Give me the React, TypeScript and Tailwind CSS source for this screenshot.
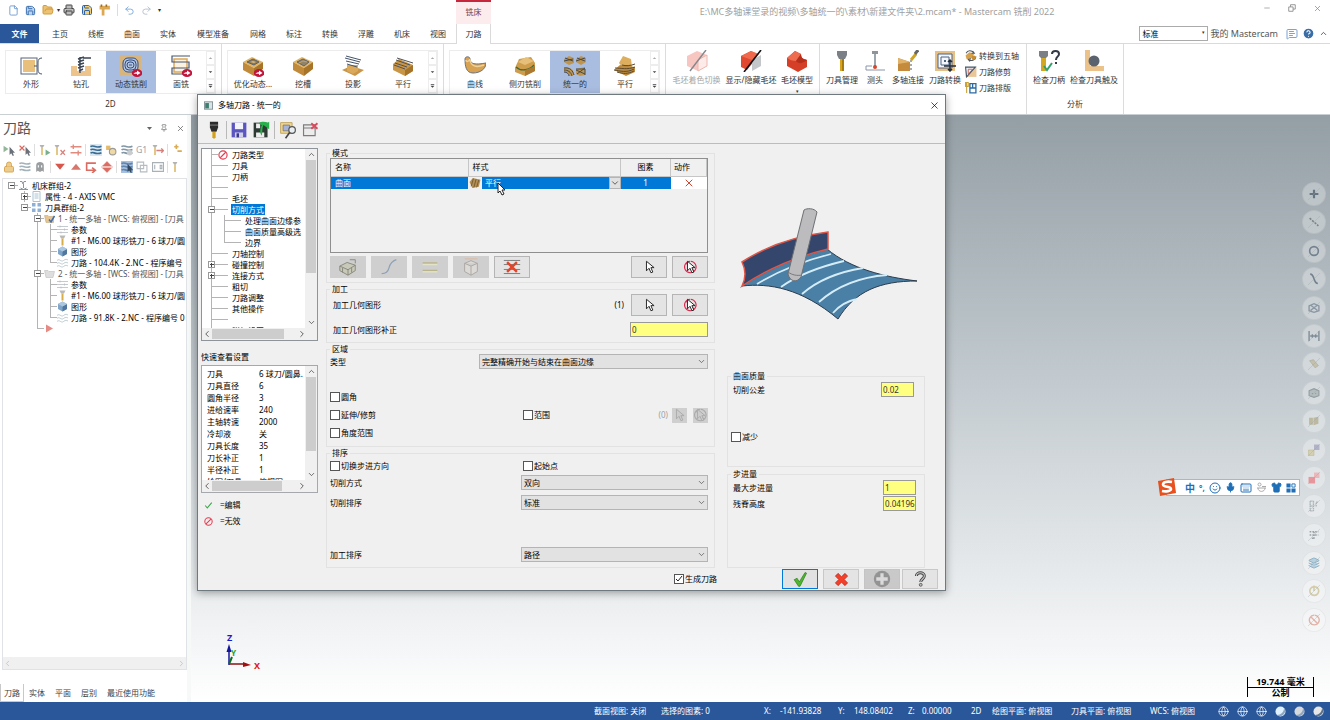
import React from 'react';
import {
  ChevronDown,
  ChevronLeft,
  ChevronRight,
  ChevronUp,
  CircleHelp,
  File,
  FolderOpen,
  Globe,
  Keyboard,
  Layers,
  Lock,
  MessageSquareText,
  Mic,
  Minus,
  Pin,
  Printer,
  Redo2,
  Save,
  Shirt,
  Smile,
  Undo2,
  X,
} from 'lucide-react';

type IconProps = { size?: number; children?: React.ReactNode; className?: string };

function Svg({ size = 22, children, className = '' }: IconProps) {
  return (
    <svg
      width={size}
      height={size}
      viewBox="0 0 22 22"
      fill="none"
      aria-hidden="true"
      className={`shrink-0 ${className}`}
    >
      {children}
    </svg>
  );
}

/* ---------- ribbon drawings ---------- */

const RedArrow = () => (
  <g>
    <ellipse cx="17" cy="18" rx="5.2" ry="4" fill="#c0163c" />
    <path d="M13.5 18.8c1-1.5 2.2-1.6 3.5-1.6v-1.7l3.5 2.6-3.5 2.2v-1.5z" fill="#fff" />
  </g>
);

const Block = ({ top = '#e0b566', left = '#c08a3a', right = '#a87428' }) => (
  <g>
    <path d="M1 7 10 2l11 5-9 6z" fill={top} />
    <path d="M1 7v8l11 6v-8z" fill={left} />
    <path d="M21 7v7l-9 7v-8z" fill={right} />
  </g>
);

const icons: Record<string, React.ReactNode> = {
  contour: (
    <>
      <rect x="1" y="3" width="16" height="16" stroke="#56657a" />
      <rect x="3" y="5" width="12" height="12" fill="#e8c07c" />
      <path d="M22 3c-3 0-4 2-4 4v8c0 2 1 4 4 4M17 11h-3" stroke="#44536b" />
    </>
  ),
  drill: (
    <>
      <path d="M1 11h6v5h8v-5h6v10H1z" fill="#ecc48c" />
      <path d="M10 2v16M8 4l6-2M8 7l6-2M8 10l6-2M8 13l6-2M9 16l4-2M13 3h8" stroke="#3d4654" strokeWidth="1.4" />
    </>
  ),
  dynamic: (
    <>
      <rect x="0" y="0" width="21" height="20" fill="#d9b57e" />
      <rect x="3" y="3" width="15" height="14" rx="5" fill="#b3c4df" stroke="#324f83" />
      <rect x="5" y="5" width="11" height="10" rx="4" stroke="#324f83" />
      <rect x="7" y="7" width="7" height="6" rx="3" stroke="#324f83" />
      <path d="M9 10h3" stroke="#324f83" />
      <RedArrow />
    </>
  ),
  face: (
    <>
      <rect x="4" y="4" width="13" height="13" fill="#fbf2e2" stroke="#dca85a" strokeWidth="1.5" />
      <path d="M20 1H2v6h17v6H2v6h11" stroke="#46566e" strokeWidth="1.2" />
      <RedArrow />
    </>
  ),
  opti: (
    <>
      <Block />
      <path d="m5 7 6-3 6 3-5 3z" fill="#8d7a55" stroke="#596270" />
      <path d="m8 7 3-1 3 1-2 1z" fill="#d6b77f" />
      <RedArrow />
    </>
  ),
  pocket: (
    <>
      <Block />
      <path d="m5 7 6-3 6 3-5 4z" fill="#91836a" stroke="#5e6470" />
      <path d="m7 8 4-2 4 1" stroke="#c7a25f" />
    </>
  ),
  project: (
    <>
      <path d="m0 15 9-4 13 4-9 6z" fill="#c99547" />
      <path d="M5 10v6l6 3 5-3v-6z" fill="#dba95a" />
      <path d="m4 1 15 4M3 3l15 4M4 6l13 3M5 9l10 3" stroke="#44536a" />
    </>
  ),
  parallel: (
    <>
      <path d="m1 9 6-5 14 6v6l-8 5-12-6z" fill="#c99547" />
      <path d="m13 15 8-5v6l-8 5z" fill="#a5732a" />
      <path d="m5 3 16 5M4 5l14 5M3 8l12 4M2 10l11 4" stroke="#4d5257" />
    </>
  ),
  curve: (
    <>
      <path d="M1 4c0-3 5-3 5 0 0 5 5 6 16 4 0 6-6 10-13 10C2 18 1 11 1 4z" fill="#d7a252" stroke="#6b7380" />
      <path d="M6 4c-1 3-4 3-4 1M6 5c1 6 6 8 14 5" stroke="#f0d19a" strokeWidth="1.5" />
    </>
  ),
  swarf: (
    <>
      <path d="m1 13 4-9 12-2 4 6v8l-10 5-10-4z" fill="#cf9d4b" />
      <path d="m4 7 7 3 9-4-8-4z" fill="#e6c07a" />
      <path d="M2 12c5 5 14 3 18-2" stroke="#3f6a3a" strokeWidth="1.4" />
      <path d="m11 15 10-4v5l-10 5z" fill="#ab7a30" />
    </>
  ),
  unified: (
    <>
      <path d="m0 4 5-3 5 2v5l-5 2-5-3zM12 4l5-3 5 2v4l-5 3-5-3zM0 13c5-2 10 1 10 7l-5 1c0-3-2-4-5-4zM12 14l9-2v8l-5 1-4-2z" fill="#c0954b" />
      <path d="m0 6 9-2M1 3l8 3M13 3l8 3M12 6l9-3M0 13c6-1 9 3 10 7M0 15c4 0 7 2 8 6M0 17c3 0 5 2 5 4M12 15l9 4M13 19l8-6M12 14h9v6" stroke="#414a55" />
    </>
  ),
  parallel5: (
    <>
      <path d="M5 8 9 1l8 3 1 8-8 2z" fill="#dcae5e" />
      <path d="m0 15 6-5 15 2v5l-9 4z" fill="#bd8b3f" />
      <path d="M1 13c6 0 12 2 20-1M0 15c6 1 13 3 20-1M3 17c6 2 11 2 17-1M8 10c4 1 8 1 13-1" stroke="#5d4a2e" />
    </>
  ),
  stockShade: (
    <>
      <path d="M1 6 11 1l10 4v11l-9 5-11-5z" fill="#f7c6c0" />
      <path d="M12 10v11l9-5V5z" fill="#fdebe9" stroke="#efb6ae" />
      <path d="m20 0-16 21" stroke="#83878c" strokeWidth="1.4" />
    </>
  ),
  stockHide: (
    <>
      <path d="M1 6 11 1l4 2v7l-8 10-6-3z" fill="#e0492f" />
      <path d="m12 10 9-5v11l-9 5z" fill="#c3c7ca" />
      <path d="m1 6 10-5 8 3-7 6z" fill="#ef6a4d" />
      <path d="M21 0 4 22" stroke="#111" strokeWidth="1.6" />
    </>
  ),
  stockModel: (
    <>
      <path d="M1 8 9 1l6 3c0 4 2 5 6 6v7l-9 5-11-6z" fill="#d63f27" />
      <path d="M1 8 9 1l6 3-5 7c-4 0-6-1-9-3z" fill="#ee6c50" />
      <path d="M10 11c2 3 6 3 11-1-4-1-6-2-6-6z" fill="#b52f1b" />
    </>
  ),
  toolManager: (
    <>
      <path d="M6 1h10v4l-2 4H8L6 5z" fill="#7b8087" />
      <path d="M9 9h4v12H9z" fill="#d6a41e" />
      <path d="M11 9h2v12h-2z" fill="#a87b0e" />
    </>
  ),
  probe: (
    <>
      <path d="M8 1h6v3H8z" fill="#8c949c" />
      <path d="M11 4v12" stroke="#76808a" strokeWidth="1.4" />
      <circle cx="11" cy="17" r="2" fill="#d6452c" />
      <path d="M21 20H2v-4h6" stroke="#8996a8" />
    </>
  ),
  multiLink: (
    <>
      <path d="m1 8 12 4v9H1z" fill="#c58b3d" />
      <path d="m1 8 12 4-12 2z" fill="#e0b26a" />
      <path d="M14 10v11" stroke="#555" strokeDasharray="2 2" />
      <path d="m14 10 5-6" stroke="#d0a524" strokeWidth="3" />
      <path d="m18 4 3-4" stroke="#666" strokeWidth="3" />
    </>
  ),
  transform: (
    <>
      <rect x="1" y="1" width="20" height="20" fill="#e6bf85" />
      <path d="M4 4h14v14H4zM7 7h8v8H7z" fill="#f5f7fa" stroke="#4a6384" />
      <path d="M10 10h2v2h-2z" fill="#4a6384" />
      <path d="M16 10v11M10 16h12M14 12l2-2 2 2M14 19l2 2 2-2" stroke="#222c38" strokeWidth="1.5" />
    </>
  ),
  to5: (
    <>
      <path d="m1 10 7-6 9 3-5 8-9 2z" fill="#d8a24c" />
      <path d="M2 6c3-6 10-6 14-1M20 12c0 6-8 9-13 6M14 2l3 4h-5M9 21l-3-4 5-1" stroke="#4d5662" strokeWidth="2" />
      <circle cx="16" cy="14" r="4" fill="#c78d34" />
    </>
  ),
  trim: (
    <>
      <path d="M1 2h20v18H1z" fill="#eac796" />
      <path d="M1 2h18L3 20z" fill="#eef1f6" stroke="#44546a" strokeWidth="2" />
      <path d="M6 6h8L6 15z" stroke="#c9503a" strokeWidth="1.5" />
    </>
  ),
  nest: (
    <>
      <path d="M3 1v19M1 1h5v7H1z" stroke="#caa23a" strokeWidth="2" />
      <path d="M9 3h11v17H9zM9 11h11M14 3v8" stroke="#2c6aa4" strokeWidth="2.4" />
    </>
  ),
  holderCheck: (
    <>
      <path d="M1 1h9v5l-2 2H3L1 6z" fill="#7b8087" />
      <path d="M3 8h5v13H3z" fill="#d3a722" />
      <path d="m6 16 3 4 5-7" stroke="#32a06b" strokeWidth="2" />
      <path d="M14 4c0-4 7-4 7 0 0 3-3 2-3 6M18 12v2" stroke="#333a45" strokeWidth="2" />
    </>
  ),
  reachCheck: (
    <>
      <path d="M2 0h5v16h14v5H2z" fill="#eac28a" />
      <circle cx="11" cy="11" r="5.5" fill="#5b646e" />
    </>
  ),
};

type RibbonItem = { icon: string; label: string; width?: string; active?: boolean; dim?: boolean };

function Gallery({ items }: { items: RibbonItem[] }) {
  return (
    <div className="flex h-11 border border-[#ececec]">
      {items.map((item) => (
        <button
          key={item.label}
          className={`w-[50px] flex flex-col items-center justify-between pt-1 pb-[3px] ${
            item.active ? 'bg-[#a9bde0]' : ''
          }`}
        >
          <Svg>{icons[item.icon]}</Svg>
          <span className="leading-3">{item.label}</span>
        </button>
      ))}
      <div className="w-[9px] flex flex-col text-[#555]">
        {['M2 5h4L4 3z', 'M2 3h4L4 5z', 'M2 2h4v1H2zM2 4h4L4 6z'].map((d, i) => (
          <button
            key={d}
            aria-label={['上一行', '下一行', '更多'][i]}
            className="flex-1 flex items-center justify-center border border-[#ededed]"
          >
            <svg width="8" height="8" viewBox="0 0 8 8" aria-hidden="true">
              <path d={d} fill={i === 0 ? '#aaa' : '#444'} />
            </svg>
          </button>
        ))}
      </div>
    </div>
  );
}

function RibbonGroup({ title, children, pad = 'px-[5px]' }: { title?: string; children: React.ReactNode; pad?: string }) {
  return (
    <div className={`flex flex-col justify-between border-r border-[#dcdcdc] pt-[6px] pb-1 ${pad}`}>
      <div className="flex">{children}</div>
      <div className="text-center leading-3">{title}</div>
    </div>
  );
}

function BigButton({ icon, label, width = 'w-[38px]', dim }: RibbonItem) {
  return (
    <button
      className={`${width} h-10 flex flex-col items-center gap-[2px] whitespace-nowrap ${dim ? 'text-[#a5a5a5]' : ''}`}
    >
      <Svg>{icons[icon]}</Svg>
      <span className="leading-3">{label}</span>
    </button>
  );
}

/* ---------- header ---------- */

const menuTabs = ['主页', '线框', '曲面', '实体', '模型准备', '网格', '标注', '转换', '浮雕', '机床', '视图'];

function TitleBar() {
  return (
    <div className="h-6 flex">
      <div className="w-[456px] h-5 flex items-center pl-2 gap-[6px]">
        <File size={11} color="#6d9bd0" />
        <Save size={11} color="#2f65a8" fill="#bcd4ee" />
        <FolderOpen size={12} color="#d09a3c" fill="#edc272" />
        <span className="text-[6px] -mx-[3px]">▾</span>
        <Printer size={12} color="#444" fill="#bbb" />
        <Save size={12} color="#2f65a8" fill="#f3cf78" />
        <Svg size={12}>
          <path d="M1 3h19v7H10v11H5V10H1z" fill="#dda852" />
          <path d="M3 1h3v4H3zM12 1h3v4h-3z" fill="#9c6b22" />
        </Svg>
        <span className="w-px h-3 bg-[#dcdcdc]" />
        <Undo2 size={11} color="#7ea9d8" />
        <Redo2 size={11} color="#b3bfcc" />
        <span className="text-[6px]">▾</span>
      </div>
      <div className="w-[35px] border-t-2 border-[#c5283d] bg-[#fdecee] text-center leading-5 text-[#7a3a40]">铣床</div>
      <div className="flex-1 text-center text-[9px] leading-6 text-[#a0a0a0]">
        E:\MC多轴课堂录的视频\多轴统一的\素材\新建文件夹\2.mcam* - Mastercam 铣削 2022
      </div>
      <div className="w-[67px] h-4 flex items-center justify-between pr-2 text-[#8a8a8a]">
        <button aria-label="最小化"><Minus size={8} /></button>
        <button aria-label="还原">
          <Svg size={8}>
            <path d="M2 8h12v12H2zM7 8V2h13v12h-6" stroke="currentColor" strokeWidth="2.4" />
          </Svg>
        </button>
        <button aria-label="关闭"><X size={9} /></button>
      </div>
    </div>
  );
}

function MenuTabs() {
  return (
    <div className="h-5 flex items-stretch border-b border-[#dadada]">
      <button className="w-[39px] mr-[3px] bg-[#2a579a] text-white font-bold">文件</button>
      {menuTabs.map((tab) => (
        <button key={tab} className={tab.length > 2 ? 'w-[54px]' : 'w-9'}>
          {tab}
        </button>
      ))}
      <button className="w-[35px] -mb-px bg-white border-x border-[#dadada]">刀路</button>
      <div className="ml-auto flex items-center gap-[2px] pr-[2px]">
        <div className="relative">
          <select aria-label="配置" className="appearance-none w-[69px] h-[15px] pl-[2px] border border-[#ababab] text-black">
            <option>标准</option>
          </select>
          <span className="absolute right-[3px] top-[3px] text-[5px]">▾</span>
        </div>
        <a href="#my" className="text-[9px] text-[#555]">我的 Mastercam</a>
        <MessageSquareText size={12} color="#7ba4d4" className="ml-[6px]" />
        <CircleHelp size={13} color="#fff" fill="#3a6ea8" className="mx-[2px]" />
        <ChevronUp size={9} color="#333" />
      </div>
    </div>
  );
}

function Ribbon() {
  return (
    <div className="h-[71px] flex border-b border-[#c9d0d3]">
      <RibbonGroup title="2D">
        <Gallery
          items={[
            { icon: 'contour', label: '外形' },
            { icon: 'drill', label: '钻孔' },
            { icon: 'dynamic', label: '动态铣削', active: true },
            { icon: 'face', label: '面铣' },
          ]}
        />
      </RibbonGroup>
      <RibbonGroup>
        <Gallery
          items={[
            { icon: 'opti', label: '优化动态...' },
            { icon: 'pocket', label: '挖槽' },
            { icon: 'project', label: '投影' },
            { icon: 'parallel', label: '平行' },
          ]}
        />
      </RibbonGroup>
      <RibbonGroup>
        <Gallery
          items={[
            { icon: 'curve', label: '曲线' },
            { icon: 'swarf', label: '侧刃铣削' },
            { icon: 'unified', label: '统一的', active: true },
            { icon: 'parallel5', label: '平行' },
          ]}
        />
      </RibbonGroup>
      <RibbonGroup pad="px-[3px]">
        <BigButton icon="stockShade" label="毛坯着色切换" width="w-[55px]" dim />
        <BigButton icon="stockHide" label="显示/隐藏毛坯" width="w-[54px]" />
        <div className="flex flex-col items-center">
          <BigButton icon="stockModel" label="毛坯模型" />
          <span className="h-1 text-[5px] leading-[3px]">▾</span>
        </div>
      </RibbonGroup>
      <RibbonGroup pad="px-[3px]">
        <BigButton icon="toolManager" label="刀具管理" />
        <BigButton icon="probe" label="测头" width="w-7" />
        <BigButton icon="multiLink" label="多轴连接" />
        <BigButton icon="transform" label="刀路转换" width="w-9" />
        <div className="flex flex-col w-[60px] pl-[2px] -mt-[2px]">
          {[
            ['to5', '转换到五轴'],
            ['trim', '刀路修剪'],
            ['nest', '刀路排版'],
          ].map(([icon, label]) => (
            <button key={label} className="h-4 flex items-center gap-[2px]">
              <Svg size={12}>{icons[icon]}</Svg>
              {label}
            </button>
          ))}
        </div>
      </RibbonGroup>
      <RibbonGroup title="分析" pad="px-[3px]">
        <BigButton icon="holderCheck" label="检查刀柄" />
        <BigButton icon="reachCheck" label="检查刀具触及" width="w-[52px]" />
      </RibbonGroup>
    </div>
  );
}

/* ---------- trees ---------- */

// ' ' blank, v vertical, t tee, l corner; + and - are expanders on a line, r is the open root
function TreeCell({ kind }: { kind: string }) {
  if (kind === ' ') return <span className="w-[13px] shrink-0" />;
  const box = kind === '+' || kind === '-' || kind === 'r';
  return (
    <svg width="13" height="11" viewBox="0 0 13 11" className="shrink-0" aria-hidden="true" shapeRendering="crispEdges">
      {kind !== 'r' && <path d={kind === 'l' ? 'M6.5 0v6' : 'M6.5 0v11'} stroke="#b4b4b4" />}
      {kind !== 'v' && <path d="M6.5 5.5H13" stroke="#b4b4b4" />}
      {box && <rect x="3.5" y="2.5" width="6" height="6" fill="#fff" stroke="#999" />}
      {box && <path d={kind === '+' ? 'M5 5.5h4M6.5 4v4' : 'M5 5.5h4'} stroke="#444" />}
    </svg>
  );
}

const opIcons: Record<string, React.ReactNode> = {
  machine: <path d="M4 3h4l2 5 2-5h4M11 8v8M2 19h18M5 16l6 3 6-3" stroke="#8a93a0" strokeWidth="2" />,
  props: <path d="M4 1h14v20H4zM7 6h8M7 10h8M7 14h8" stroke="#a9c3d2" strokeWidth="2" />,
  group: <path d="M2 2h7v7H2zM13 2h7v7h-7zM2 13h7v7H2zM13 13h7v7h-7z" fill="#8fb0d6" />,
  folderOn: (
    <>
      <path d="M1 5h7l2 2h9v12H4z" fill="#e8c48e" stroke="#b9a27c" />
      <path d="m10 13 4 5 7-12" stroke="#3f6fb0" strokeWidth="3" />
    </>
  ),
  folder: <path d="M1 5h7l2 2h11l-3 12H4z" fill="#dedede" stroke="#b5b5b5" />,
  params: <path d="M0 5h22M0 11h22M0 17h22M6 3v4M15 9v4M8 15v4" stroke="#b6bdc2" strokeWidth="1.6" />,
  tool: (
    <>
      <path d="M5 1h12l-3 6H8z" fill="#b9b9b9" />
      <path d="M11 7v14" stroke="#d6ad48" strokeWidth="4" />
    </>
  ),
  geometry: (
    <>
      <path d="M2 6 11 1l9 5v10l-9 5-9-5z" fill="#7fa6c9" />
      <path d="m11 11 9-5v10l-9 5z" fill="#52779e" />
      <path d="M2 6 11 1l9 5-9 5z" fill="#abc8e0" />
    </>
  ),
  path: <path d="M0 7c5-5 8 4 13 0s6-2 9-1M0 13c5-5 8 4 13 0s6-2 9-1M0 19c5-5 8 4 13 0s6-2 9-1" stroke="#a8bcc4" strokeWidth="1.5" />,
  insert: <path d="m4 3 14 8-14 8z" fill="#e58a84" />,
};

const opRows: [string, string, string][] = [
  ['r', 'machine', '机床群组-2'],
  [' +', 'props', '属性 - 4 - AXIS VMC'],
  [' r', 'group', '刀具群组-2'],
  ['  -', 'folderOn', '1 - 统一多轴 - [WCS: 俯视图] - [刀具'],
  ['  vt', 'params', '参数'],
  ['  vt', 'tool', '#1 - M6.00 球形铣刀 - 6 球刀/圆'],
  ['  vt', 'geometry', '图形'],
  ['  vl', 'path', '刀路 - 104.4K - 2.NC - 程序编号'],
  ['  -', 'folder', '2 - 统一多轴 - [WCS: 俯视图] - [刀具'],
  ['  vt', 'params', '参数'],
  ['  vt', 'tool', '#1 - M6.00 球形铣刀 - 6 球刀/圆'],
  ['  vt', 'geometry', '图形'],
  ['  vl', 'path', '刀路 - 91.8K - 2.NC - 程序编号 0'],
  ['  l', 'insert', ''],
];

const Wave = ({ color = '#5c87a8' }) => (
  <path d="M1 5c5-5 8 4 20-1M1 11c5-5 8 4 20-1M1 17c5-5 8 4 20-1" stroke={color} strokeWidth="3" />
);

const ToolT = ({ children }: { children?: React.ReactNode }) => (
  <>
    <path d="M1 2h9L7 7H4z" fill="#b3b3b3" />
    <path d="M5.5 7v13" stroke="#dcbb6e" strokeWidth="3" />
    {children}
  </>
);

const cursorPath = 'M12 5v15l3-3 3 5 2-1-2-5h4z';

const toolRows: React.ReactNode[][] = [
  [
    <><path d="M1 3v12l9-6z" fill="#93b598" /><path d={cursorPath} fill="#6a7078" /></>,
    <><path d="m1 3 9 9M10 3l-9 9" stroke="#da6a62" strokeWidth="2.5" /><path d={cursorPath} fill="#6a7078" /></>,
    null,
    <ToolT><path d="M12 10v11l9-5z" fill="#77b08b" /></ToolT>,
    <ToolT><path d="m12 11 8 9M20 11l-8 9" stroke="#dd8078" strokeWidth="2.5" /></ToolT>,
    <><path d="M1 5h20M1 16h20M6 1v8M15 12v9" stroke="#e08b7e" strokeWidth="2.5" /></>,
    null,
    <><rect width="22" height="22" fill="#dbe7f0" /><Wave color="#3a6c94" /></>,
    <><path d="M2 3h8v8H2z" fill="#e3bb6a" /><circle cx="14" cy="14" r="6" stroke="#9a9a9a" strokeWidth="2" fill="#eed9a5" /></>,
    <><Wave color="#8296a6" /><circle cx="16" cy="16" r="5" fill="#c9cdd0" /></>,
    <text x="0" y="17" fontSize="16" fill="#97a3ad">G1</text>,
    <ToolT><path d="M8 12h13M17 8l4 4-4 4" stroke="#d9807a" strokeWidth="2.5" /></ToolT>,
    null,
    <path d="M8 1v8M4 5h8M10 13h8" stroke="#dcaa52" strokeWidth="3" />,
  ],
  [
    <Lock size={22} color="#d9a957" fill="#edcd8d" />,
    <Wave color="#a3b2ba" />,
    <><path d="M4 20V8c0-8 14-8 14 0v12l-3-2-4 2-4-2z" fill="#9b9ea1" /><path d="M8 8v4M14 8v4" stroke="#fff" strokeWidth="2" /></>,
    null,
    <path d="M2 5h18l-9 11z" fill="#d8574c" />,
    <path d="M2 16h18L11 5z" fill="#d8766c" />,
    <path d="M20 4H3v13h14M13 12l6 5-6 5" stroke="#dc6c62" strokeWidth="3" />,
    <path d="M3 9 11 1l8 8zM3 13l8 8 8-8zM0 11h22" fill="#dc6c62" stroke="#dc6c62" />,
    null,
    <><rect width="22" height="22" fill="#a8c0e0" /><Wave color="#5f84ad" /><path d={cursorPath} fill="#34495f" /></>,
    <path d="M2 2h12v12H2zM8 8h12v12H8z" stroke="#b5bcc2" strokeWidth="2" />,
    <path d="M1 3h20v16H1zM5 7v8M15 8h3v6h-3z" stroke="#a9b0b6" strokeWidth="2" />,
    null,
    <ToolT />,
  ],
];

function HScroll({ thumb }: { thumb: string }) {
  return (
    <div className="h-3 shrink-0 flex items-center justify-between bg-[#f0f0f0] text-[#444]">
      <ChevronLeft size={10} />
      <span className={`h-[10px] mr-auto bg-[#cdcdcd] ${thumb}`} />
      <ChevronRight size={10} className="mr-[10px]" />
    </div>
  );
}

function VScroll({ thumb }: { thumb: string }) {
  return (
    <div className="w-3 shrink-0 flex flex-col items-center py-px gap-px bg-[#f0f0f0] text-[#444]">
      <ChevronUp size={9} />
      <span className={`w-[10px] mb-auto bg-[#cdcdcd] ${thumb}`} />
      <ChevronDown size={9} />
    </div>
  );
}

function OperationsPanel() {
  return (
    <aside className="w-[191px] pr-1 shrink-0 flex flex-col bg-[#f7f8f8]">
      <div className="flex-1 min-h-0 flex flex-col bg-white">
        <div className="h-[26px] flex items-center pl-[3px] pr-[2px]">
          <h1 className="text-sm leading-5 text-[#555] mr-auto">刀路</h1>
          <div className="flex items-center gap-2 text-[#666]">
            <svg width="5" height="3" viewBox="0 0 5 3" aria-hidden="true">
              <path d="M0 0h5L2.5 3z" fill="#666" />
            </svg>
            <Pin size={8} />
            <X size={9} />
          </div>
        </div>
        {toolRows.map((row, r) => (
          <div key={r} className="h-[17px] flex items-center justify-between px-[3px]">
            {row.map((icon, i) =>
              icon ? (
                <Svg key={i} size={12}>{icon}</Svg>
              ) : (
                <span key={i} className="w-px h-3 bg-[#dedede]" />
              ),
            )}
          </div>
        ))}
        <div className="flex-1 min-h-0 mt-[3px] ml-[2px] flex flex-col border border-[#dfe3e5]">
          <ul className="flex-1 pl-[2px] pt-px overflow-hidden text-black">
            {opRows.map(([cells, icon, text], i) => (
              <li key={i} className="h-[11px] flex items-center whitespace-nowrap">
                {cells.split('').map((kind, c) => (
                  <TreeCell key={c} kind={kind} />
                ))}
                <Svg size={11} className="mr-[3px]">{opIcons[icon]}</Svg>
                <span className={icon.startsWith('folder') ? 'text-[#555]' : ''}>{text}</span>
              </li>
            ))}
          </ul>
          <div className="h-3 flex items-center justify-between bg-[#f0f0f0] text-[#bdbdbd]">
            <ChevronLeft size={9} />
            <ChevronRight size={9} />
          </div>
        </div>
        <div className="h-[18px] mt-[14px] flex text-[#444]">
          <button className="px-[3px] border border-t-0 border-[#c8c8c8]">刀路</button>
          <button className="px-[5px]">实体</button>
          <button className="px-[5px]">平面</button>
          <button className="px-[5px]">层别</button>
          <button className="px-[5px]">最近使用功能</button>
        </div>
      </div>
    </aside>
  );
}

/* ---------- graphics area ---------- */

const sideTools: React.ReactNode[] = [
  <path d="M11 3v16M3 11h16" stroke="#66747f" strokeWidth="4" />,
  <path d="m3 4 16 14" stroke="#7c8487" strokeWidth="3" strokeDasharray="4 2" />,
  <circle cx="11" cy="11" r="8" stroke="#73818e" strokeWidth="3" />,
  <path d="M4 2c9 0 5 17 14 17" stroke="#73818e" strokeWidth="3" />,
  <path d="m2 7 9-4 9 4v9l-9 3-9-3zM5 15 17 6M5 6l12 9" stroke="#8a97a2" strokeWidth="2.5" />,
  <path d="M2 2v18M20 2v18M4 11h14M8 8v6M14 8v6" stroke="#7d8b96" strokeWidth="2.5" />,
  <path d="m3 5 7-2 9 11-6 4z" fill="#c3c0ad" stroke="#a6a38f" />,
  <path d="m2 7 9-4 9 4v9l-9 3-9-3zM7 12h2M13 12h2" fill="#b4bcbe" stroke="#929c9f" strokeWidth="2" />,
  <path d="M2 5h7v13H2zM10 5l9-2v13l-9 3z" fill="#bcb9a0" />,
  <><path d="M11 1h10v10H11z" fill="#b0b2c5" /><path d="M1 11h10v10H1z" fill="#d3d0b5" stroke="#bcb78e" /></>,
  <><path d="M11 1h10v10H11z" fill="#e8b8bc" /><path d="M1 9h12v12H1z" fill="#e6979e" /></>,
  <path d="M4 2v18M10 2v18M4 2h6M4 11h6M4 20h6M15 12V4h4" stroke="#abb5b9" strokeWidth="2.5" strokeDasharray="3 1" />,
  <path d="M3 5h16M3 11h16M11 5v14M7 17h4" stroke="#98a1a5" strokeWidth="3" strokeDasharray="3 2" />,
  <Layers size={22} color="#8fb3ca" fill="#b9d0de" />,
  <path d="M11 3a8 8 0 1 0 1 0M11 1v10" stroke="#d5cda9" strokeWidth="3" />,
  <path d="M11 2a9 9 0 1 0 1 0M5 5l12 12" stroke="#e0b4a8" strokeWidth="2.5" />,
];

function GraphicsArea() {
  return (
    <main className="relative flex-1 bg-linear-to-b from-[#949fa5] via-[#c2cacf] via-45% to-white">
      <div className="absolute right-1 top-[67px] bottom-[70px] flex flex-col justify-between">
        {sideTools.map((icon, i) => (
          <button
            key={i}
            aria-label={`快速选择 ${i + 1}`}
            className="size-6 rounded-full border border-black/5 bg-white/30 flex items-center justify-center"
          >
            <Svg size={12}>
              {icon}
              <path d="M0 22 22 0" stroke="#9aa4a9" strokeOpacity=".6" />
            </Svg>
          </button>
        ))}
      </div>

      <div className="absolute right-[30px] top-[364px] h-[17px] w-[134px] pl-[14px] pr-[3px] flex items-center justify-between bg-white border border-[#a9b8bd] text-[#1e6fb8]">
        <svg width="20" height="20" viewBox="0 0 20 20" className="absolute -left-[10px] -top-[3px]" aria-hidden="true">
          <path d="m1 4 16-3 2 15-16 3z" fill="#e8501e" />
          <path d="M15 5c-5-1-9 0-9 2.500 0 3 8 1.500 8 4.500 0 2-5 3-9 2" stroke="#fff" strokeWidth="2.600" fill="none" />
        </svg>
        <span className="text-[10px] font-bold leading-3 pl-1">中</span>
        <span className="font-bold">°,</span>
        <Smile size={12} />
        <Mic size={11} fill="#1e6fb8" />
        <Keyboard size={12} />
        <Svg size={11}>
          <circle cx="7" cy="5" r="3" stroke="#aaa" strokeWidth="2" />
          <path d="M2 12h18M4 12c0 9 14 9 14 0M12 9h8" stroke="#aaa" strokeWidth="2" />
        </Svg>
        <Shirt size={11} fill="#1e6fb8" />
        <Svg size={10}>
          <path d="M1 1h9v9H1zM1 12h9v9H1zM12 12h9v9h-9z" fill="#1e6fb8" />
          <path d="M13 2h7v7h-7z" stroke="#1e6fb8" strokeWidth="2" />
        </Svg>
      </div>

      <svg width="44" height="46" viewBox="0 0 44 46" className="absolute left-[30px] bottom-[27px]" aria-label="坐标轴">
        <path d="M8 36V22" stroke="#1414a0" strokeWidth="1.500" />
        <path d="m5.500 23 2.500-8 2.500 8z" fill="#1414a0" />
        <path d="M8 35h16" stroke="#8a1010" strokeWidth="1.500" />
        <path d="m22 33 8 3-8 2z" fill="#a01010" />
        <path d="m8 35 3-7" stroke="#0b6b20" strokeWidth="2" />
        <text x="6" y="12" fontSize="9" fontWeight="bold" fill="#1a1acc">Z</text>
        <text x="10" y="27" fontSize="8" fontWeight="bold" fill="#16a030">Y</text>
        <text x="33" y="40" fontSize="9" fontWeight="bold" fill="#e01818">X</text>
      </svg>

      <div className="absolute right-4 bottom-[5px] w-[67px] h-5 border-x border-black text-center font-bold text-[9px] leading-[10px] text-black">
        <div className="border-b border-black">19.744 毫米</div>
        <div>公制</div>
      </div>
    </main>
  );
}

/* ---------- dialog ---------- */

const CursorIcon = ({ banned, dim }: { banned?: boolean; dim?: boolean }) => (
  <Svg size={14}>
    {banned && (
      <path d="M11 2a9 9 0 1 0 1 0M5 5l12 12" stroke={dim ? '#aaa' : '#e0244a'} strokeWidth="1.800" />
    )}
    <path d="M7 2v15l4-4 3 7 3-1-3-7h5z" fill={dim ? '#ccc' : '#fff'} stroke={dim ? '#aaa' : '#222'} strokeWidth="1.500" />
  </Svg>
);

const NoIcon = ({ size = 9 }) => (
  <Svg size={size}>
    <circle cx="11" cy="11" r="9" stroke="#e23a4e" strokeWidth="2.500" />
    <path d="M5 17 17 5" stroke="#e23a4e" strokeWidth="2.500" />
  </Svg>
);

const dialogTree: [string, string][] = [
  ['t', '刀路类型'],
  ['t', '刀具'],
  ['t', '刀柄'],
  ['t', ''],
  ['t', '毛坯'],
  ['-', '切削方式'],
  ['vt', '处理曲面边缘参'],
  ['vt', '曲面质量高级选'],
  ['vl', '边界'],
  ['t', '刀轴控制'],
  ['+', '碰撞控制'],
  ['+', '连接方式'],
  ['t', '粗切'],
  ['t', '刀路调整'],
  ['t', '其他操作'],
  ['t', ''],
  ['t', '附加设置'],
];

const quickView = [
  ['刀具', '6 球刀/圆鼻.'],
  ['刀具直径', '6'],
  ['圆角半径', '3'],
  ['进给速率', '240'],
  ['主轴转速', '2000'],
  ['冷却液', '关'],
  ['刀具长度', '35'],
  ['刀长补正', '1'],
  ['半径补正', '1'],
  ['绘图/刀具', '俯视图'],
];

const Box = ({ label, checked }: { label: string; checked?: boolean }) => (
  <label className="relative flex items-center gap-px">
    <input
      type="checkbox"
      defaultChecked={checked}
      className="peer appearance-none size-[10px] border border-[#555] bg-white"
    />
    <svg width="10" height="10" viewBox="0 0 10 10" className="absolute left-0 hidden peer-checked:block" aria-hidden="true">
      <path d="m2 5 2 2 4-5" stroke="#222" fill="none" />
    </svg>
    {label}
  </label>
);

const Combo = ({ id, value, className }: { id: string; value: string; className: string }) => (
  <div className={`relative ${className}`}>
    <select
      id={id}
      className="appearance-none w-full h-[15px] pl-[2px] border border-[#b4b4b4] bg-[#e2e2e2] block leading-3"
    >
      <option>{value}</option>
    </select>
    <ChevronDown size={9} className="absolute right-[2px] top-[3px] pointer-events-none text-[#555]" />
  </div>
);

const Field = ({ id, value, className }: { id: string; value: string; className: string }) => (
  <input
    id={id}
    defaultValue={value}
    className={`h-[15px] pl-px border border-[#999] bg-[#ffff80] text-[#333] ${className}`}
  />
);

const Group = ({ title, className = '', children }: { title: string; className?: string; children: React.ReactNode }) => (
  <fieldset className={`border border-[#e2e2e2] pl-[3px] ${className}`}>
    <legend className="h-[10px] leading-[10px] px-[2px]">{title}</legend>
    {children}
  </fieldset>
);

const SquareButton = ({ label, children, dim }: { label: string; children: React.ReactNode; dim?: boolean }) => (
  <button
    aria-label={label}
    disabled={dim}
    className={`w-9 h-[22px] flex items-center justify-center border ${
      dim ? 'bg-[#cfcfcf] border-[#cfcfcf]' : 'bg-[#e4e4e4] border-[#b5b5b5]'
    }`}
  >
    {children}
  </button>
);

function DialogSidebar() {
  return (
    <div className="w-[117px] shrink-0 flex flex-col">
      <div className="h-[193px] flex flex-col border border-[#8e9499] bg-white">
        <div className="flex-1 min-h-0 flex">
          <ul className="flex-1 pl-[3px] overflow-hidden">
            {dialogTree.map(([cells, text], i) => (
              <li key={i} className="h-[11px] flex items-center whitespace-nowrap">
                {cells.split('').map((kind, c) => (
                  <TreeCell key={c} kind={kind} />
                ))}
                {i === 0 ? <NoIcon size={10} /> : <span className="w-[10px] h-px shrink-0 bg-[#b4b4b4]" />}
                <span
                  className={`ml-[3px] px-px leading-[11px] ${
                    text === '切削方式' ? 'bg-[#0078d7] text-white' : ''
                  }`}
                >
                  {text}
                </span>
              </li>
            ))}
          </ul>
          <VScroll thumb="h-[113px]" />
        </div>
        <HScroll thumb="w-[72px]" />
      </div>

      <h2 className="mt-[10px] mb-[2px] leading-3">快速查看设置</h2>
      <div className="h-[128px] flex flex-col border border-[#a5a9ad] bg-white">
        <div className="flex-1 min-h-0 flex">
          <div className="flex-1 overflow-hidden pl-[5px] pt-px">
            <table>
              <tbody>
                {quickView.map(([name, value]) => (
                  <tr key={name} className="h-3 leading-[11px]">
                    <td className="w-[52px] min-w-[52px] p-0 whitespace-nowrap">{name}</td>
                    <td className="p-0 whitespace-nowrap">{value}</td>
                  </tr>
                ))}
              </tbody>
            </table>
          </div>
          <VScroll thumb="h-[74px]" />
        </div>
        <HScroll thumb="w-[70px]" />
      </div>
      <div className="mt-1 pl-[3px] leading-4">
        <div className="flex items-center gap-[7px]">
          <Svg size={9}>
            <path d="m3 11 5 6L19 4" stroke="#3ba54a" strokeWidth="2.500" />
          </Svg>
          =编辑
        </div>
        <div className="flex items-center gap-[7px]">
          <NoIcon />
          =无效
        </div>
      </div>
    </div>
  );
}

function PatternTable() {
  return (
    <div className="h-[95px] border border-[#8f8f8f]">
      <table className="w-full table-fixed border-collapse text-left">
        <thead>
          <tr className="h-[17px]">
            <th className="w-[137px] p-0 pl-1 font-normal border-r border-b border-[#c6c6c6]">名称</th>
            <th className="p-0 pl-1 font-normal border-r border-b border-[#c6c6c6]">样式</th>
            <th className="w-[50px] p-0 font-normal text-center border-r border-b border-[#c6c6c6]">图素</th>
            <th className="w-9 p-0 pl-[3px] font-normal border-r border-b border-[#c6c6c6]">动作</th>
          </tr>
        </thead>
        <tbody>
          <tr className="h-3 text-white">
            <td className="p-0 pl-1 bg-[#0078d7]">曲面</td>
            <td className="p-0">
              <div className="relative h-3 flex">
                <span className="w-[14px] flex items-center justify-center bg-[#f0f0f0]">
                  <Svg size={12}>
                    <path d="m1 9 6-7 14 3-3 13-12 2z" fill="#b28e52" />
                    <path d="M8 3 4 17M13 4 9 19M18 5l-4 14" stroke="#6c532a" strokeWidth="1.500" />
                  </Svg>
                </span>
                <select aria-label="样式" className="appearance-none flex-1 h-3 pl-[3px] bg-[#0078d7] leading-3">
                  <option>平行</option>
                </select>
                <span className="absolute right-0 top-0 h-3 w-3 bg-[#e1e1e1] border border-[#b5b5b5] text-[#444] pointer-events-none">
                  <ChevronDown size={10} />
                </span>
              </div>
            </td>
            <td className="p-0 text-center bg-[#0078d7]">1</td>
            <td className="p-0 bg-white">
              <button aria-label="删除" className="flex w-full justify-center text-[#d3452f]">
                <X size={12} />
              </button>
            </td>
          </tr>
        </tbody>
      </table>
    </div>
  );
}

function DialogForm() {
  return (
    <div className="w-[389px] shrink-0 flex flex-col gap-px">
      <Group title="模式" className="pr-[6px] pb-1">
        <PatternTable />
        <div className="mt-[3px] flex gap-[5px]">
          <SquareButton label="添加曲面" dim>
            <Svg size={20}>
              <path d="m2 10 8-4 9 3v6l-8 5-9-5z" fill="#c9c9b8" stroke="#85857a" />
              <path d="m2 10 9 4 8-5M11 14v6M5 12v5M15 12v5M13 3h6v4" stroke="#85857a" />
            </Svg>
          </SquareButton>
          <SquareButton label="添加曲线" dim>
            <Svg size={18}>
              <path d="M2 19c6 0 8-3 9-7s3-8 9-10" stroke="#8fa1b8" strokeWidth="1.500" />
            </Svg>
          </SquareButton>
          <SquareButton label="添加平面" dim>
            <Svg size={18}>
              <path d="M2 6h18M2 15h18" stroke="#b9b48a" strokeWidth="1.500" />
              <path d="M2 8h18M2 17h18" stroke="#e3e3c8" strokeWidth="1.500" />
            </Svg>
          </SquareButton>
          <SquareButton label="添加实体" dim>
            <Svg size={20}>
              <path d="m4 7 7-3 7 3v9l-7 4-7-4zM4 7l7 3 7-3M11 10v10" fill="#dcdad6" stroke="#a9a5a0" />
              <path d="M4 2h14" stroke="#d8b6a0" />
            </Svg>
          </SquareButton>
          <SquareButton label="全部删除">
            <Svg size={18}>
              <path d="M1 3h20M1 8h20M1 14h20M1 19h20" stroke="#7d7d7d" strokeWidth="1.200" />
              <path d="m5 5 12 12M17 5 5 17" stroke="#e0452b" strokeWidth="3" />
            </Svg>
          </SquareButton>
          <div className="ml-auto flex gap-[5px]">
            <SquareButton label="选择"><CursorIcon /></SquareButton>
            <SquareButton label="取消选择"><CursorIcon banned /></SquareButton>
          </div>
        </div>
      </Group>

      <Group title="加工" className="pr-[6px] pb-[5px]">
        <div className="flex items-center gap-[5px] pl-[3px]">
          <span className="mr-auto">加工几何图形</span>
          <span className="mr-[2px]">(1)</span>
          <SquareButton label="选择几何图形"><CursorIcon /></SquareButton>
          <SquareButton label="取消几何图形"><CursorIcon banned /></SquareButton>
        </div>
        <div className="mt-[6px] flex items-center justify-between pl-[3px]">
          <label htmlFor="offset">加工几何图形补正</label>
          <Field id="offset" value="0" className="w-[78px]" />
        </div>
      </Group>

      <Group title="区域" className="pr-[6px] pb-1">
        <div className="flex items-center justify-between">
          <label htmlFor="areaType">类型</label>
          <Combo id="areaType" value="完整精确开始与结束在曲面边缘" className="w-[229px]" />
        </div>
        <div className="mt-[19px] h-[18px] flex items-center"><Box label="圆角" /></div>
        <div className="h-[18px] flex items-center">
          <div className="w-[193px]"><Box label="延伸/修剪" /></div>
          <Box label="范围" />
          <span className="ml-auto mr-1 text-[#a0a0a0]">(0)</span>
          <button disabled aria-label="选择范围" className="size-[15px] mr-[6px] bg-[#cfcfcf]"><CursorIcon dim /></button>
          <button disabled aria-label="取消范围" className="size-[15px] bg-[#cfcfcf]"><CursorIcon banned dim /></button>
        </div>
        <div className="h-[18px] flex items-center"><Box label="角度范围" /></div>
      </Group>

      <Group title="排序" className="pr-[6px] pb-[5px]">
        <div className="h-4 flex items-center">
          <div className="w-[193px]"><Box label="切换步进方向" /></div>
          <Box label="起始点" />
        </div>
        <div className="mt-px flex items-center justify-between">
          <label htmlFor="cutMethod">切削方式</label>
          <Combo id="cutMethod" value="双向" className="w-[187px]" />
        </div>
        <div className="mt-[5px] flex items-center justify-between">
          <label htmlFor="cutOrder">切削排序</label>
          <Combo id="cutOrder" value="标准" className="w-[187px]" />
        </div>
        <div className="mt-[37px] flex items-center justify-between">
          <label htmlFor="machOrder">加工排序</label>
          <Combo id="machOrder" value="路径" className="w-[187px]" />
        </div>
      </Group>
    </div>
  );
}

function SurfacePreview() {
  return (
    <svg width="180" height="118" viewBox="0 0 180 118" aria-label="平行刀路预览">
      <path
        d="M3 80C30 77 62 82 99 113c17-28 42-38 79-38C146 71 112 63 88 43 60 50 30 62 3 80z"
        fill="#4a7fa6"
        stroke="#2d3c4b"
      />
      <g stroke="#d5edf8" strokeWidth="1.800" fill="none">
        <path d="M18 78c20-12 46-23 74-30M42 81c18-13 42-21 63-26M63 88c16-14 36-22 61-26M80 96c18-16 42-25 68-27M94 107c6-7 14-12 24-14" />
      </g>
      <path d="M3 56c26-17 55-26 86-30v17C60 50 30 62 3 80c4-8 4-16 0-24z" fill="#34466b" stroke="#dd5648" strokeWidth="1.500" />
      <path d="m65 4-16 64c2 8 9 9 13 3L78 6c-3-4-10-4-13-2z" fill="#bcbcbf" stroke="#6d6f73" />
      <path d="M49 66c4 3 9 4 14 3" stroke="#77797d" fill="none" />
    </svg>
  );
}

function DialogSide() {
  return (
    <div className="w-[198px] shrink-0 flex flex-col gap-[2px]">
      <div className="h-[221px] pt-[58px] pl-3">
        <SurfacePreview />
      </div>
      <Group title="曲面质量" className="pr-[3px] pb-5">
        <div className="mt-px flex items-center justify-between pl-[2px] pr-[7px]">
          <label htmlFor="tolerance">切削公差</label>
          <Field id="tolerance" value="0.02" className="w-[33px]" />
        </div>
        <div className="mt-[31px] h-[18px] flex items-center"><Box label="减少" /></div>
      </Group>
      <Group title="步进量" className="flex-1 pr-[3px]">
        <div className="mt-px flex items-center justify-between pl-[2px] pr-[5px]">
          <label htmlFor="stepover">最大步进量</label>
          <Field id="stepover" value="1" className="w-[33px]" />
        </div>
        <div className="mt-px flex items-center justify-between pl-[2px] pr-[5px]">
          <label htmlFor="scallop">残脊高度</label>
          <Field id="scallop" value="0.04196" className="w-[33px]" />
        </div>
      </Group>
    </div>
  );
}

function DialogToolbar() {
  return (
    <div className="h-7 flex items-center pl-[7px] border-b border-[#bcbcbc]">
      <Svg size={18}>
        <path d="M6 1h10v7l-2 5H8L6 8z" fill="#2b2b2b" />
        <path d="M6 5h10" stroke="#999" />
        <path d="M9 13h4v7l-2 2-2-2z" fill="#d3a11c" />
      </Svg>
      <span className="mx-[3px] w-px h-[18px] bg-[#b9b9b9]" />
      <Svg size={18}>
        <path d="M2 2h18v18H2z" fill="#5a55bf" />
        <path d="M6 2h10v8H6z" fill="#f3f3fa" />
        <path d="M6 14h10v6H6z" fill="#cfcfe8" />
        <path d="M8 15h3v5H8z" fill="#3d3993" />
      </Svg>
      <Svg size={18} className="ml-1">
        <path d="M2 2h17v18H2z" fill="#2e3a34" />
        <path d="M5 14h10v6H5zM5 3h5v6H5z" fill="#eee" />
        <path d="M8 3c4-3 8-2 11-1l2-1v9l-7-5c-2 4-1 9-2 13-3-3-2-9 0-13-2-1-3-1-4-2z" fill="#25b24a" />
      </Svg>
      <span className="mx-1 w-px h-[18px] bg-[#b9b9b9]" />
      <Svg size={18}>
        <path d="M2 2h14v13H2z" fill="#f1d78f" stroke="#b99b4d" />
        <path d="M5 5h8v7H5z" fill="#a7b3d9" stroke="#777" />
        <circle cx="16" cy="11" r="4" fill="#e9eef3" stroke="#555" strokeWidth="1.500" />
        <path d="m13 14-5 7" stroke="#444" strokeWidth="2" />
      </Svg>
      <Svg size={17} className="ml-[5px]">
        <path d="M2 5h15v14H2zM2 9h15" fill="#ececec" stroke="#7d7d7d" strokeWidth="1.500" />
        <path d="m12 3 8 7M20 3l-8 7" stroke="#e1475a" strokeWidth="2.500" />
      </Svg>
    </div>
  );
}

function ToolpathDialog() {
  const action = 'w-9 h-5 flex items-center justify-center border';
  return (
    <div
      role="dialog"
      aria-label="多轴刀路 - 统一的"
      className="absolute left-[197px] top-[94px] w-[749px] border border-[#6f7a80] bg-[#f0f0f0] text-black shadow-[0_2px_8px_rgba(0,0,0,0.35)]"
    >
      <div className="h-[21px] flex items-center pl-[6px] pr-[5px] gap-[5px] bg-white border-b border-[#cfcfcf]">
        <Svg size={9}>
          <rect x="1" y="2" width="20" height="18" fill="#d9e3e6" stroke="#77858c" strokeWidth="2" />
          <rect x="3" y="5" width="9" height="13" fill="#3b7f6c" />
        </Svg>
        <span className="mr-auto">多轴刀路 - 统一的</span>
        <button aria-label="关闭对话框"><X size={11} strokeWidth={1.5} /></button>
      </div>
      <DialogToolbar />
      <div className="flex pt-1 pl-[3px]">
        <DialogSidebar />
        <div className="w-2 shrink-0" />
        <DialogForm />
        <div className="w-3 shrink-0" />
        <DialogSide />
      </div>
      <div className="flex items-center justify-end pt-px pb-px pr-[7px] gap-[5px]">
        <div className="mr-[60px]"><Box label="生成刀路" checked /></div>
        <button aria-label="确定" className={`${action} bg-[#e1e1e1] border-[#0078d7]`}>
          <Svg size={16}>
            <path d="m3 12 4-2 3 5 8-13 2 1-9 18h-2z" fill="#4cb82e" stroke="#2f7d1c" />
          </Svg>
        </button>
        <button aria-label="取消" className={`${action} bg-[#e4e4e4] border-[#c8c8c8]`}>
          <Svg size={15}>
            <path d="m6 2 5 5 5-5 4 4-5 5 5 5-4 4-5-5-5 5-4-4 5-5-5-5z" fill="#f2402a" stroke="#b0261a" />
          </Svg>
        </button>
        <div className="flex gap-[2px]">
          <button disabled aria-label="添加" className={`${action} bg-[#c9c9c9] border-[#c4c4c4]`}>
            <Svg size={18}>
              <circle cx="11" cy="11" r="10" fill="#939393" />
              <path d="M11 4v14M4 11h14" stroke="#dadada" strokeWidth="4" />
            </Svg>
          </button>
          <button aria-label="帮助" className={`${action} bg-[#e4e4e4] border-[#c8c8c8]`}>
            <Svg size={16}>
              <path d="M6 7c0-6 11-6 11 0 0 4-5 4-5 8" stroke="#444" strokeWidth="4" />
              <path d="M6 7c0-6 11-6 11 0 0 4-5 4-5 8" stroke="#c8c8c8" strokeWidth="1.500" />
              <circle cx="12" cy="19" r="2" fill="#bbb" stroke="#444" />
            </Svg>
          </button>
        </div>
      </div>
    </div>
  );
}

/* ---------- status bar ---------- */

const statusItems = [
  ['截面视图: 关闭', 'w-[67px]'],
  ['选择的图素: 0', 'w-[103px]'],
  ['X:', 'w-4'],
  ['-141.93828', 'w-[58px]'],
  ['Y:', 'w-4'],
  ['148.08402', 'w-[54px]'],
  ['Z:', 'w-[14px]'],
  ['0.00000', 'w-[49px]'],
  ['2D', 'w-[21px]'],
  ['绘图平面: 俯视图', 'w-[79px]'],
  ['刀具平面: 俯视图', 'w-[79px]'],
  ['WCS: 俯视图', 'w-[68px]'],
];

function StatusBar() {
  return (
    <footer className="h-[18px] flex items-center justify-end bg-[#2a579a] text-white whitespace-nowrap">
      {statusItems.map(([text, width]) => (
        <span key={text} className={`${width} shrink-0`}>{text}</span>
      ))}
      <div className="flex gap-2 pr-[6px]">
        <Globe size={11} strokeWidth={1.5} />
        <Globe size={11} strokeWidth={1.5} />
        <Globe size={11} strokeWidth={1.5} />
        {['#dff0ff', '#d5d9de', '#e6e6e6'].map((fill, i) => (
          <Svg key={fill} size={11}>
            <circle cx="11" cy="11" r="10" fill={fill} />
            <path d="M18 4a10 10 0 0 1-14 14c8 0 14-6 14-14z" fill={i === 2 ? '#5d7188' : '#8fa6bf'} />
          </Svg>
        ))}
      </div>
    </footer>
  );
}

export default function App() {
  return (
    <div className="relative h-screen flex flex-col overflow-hidden bg-white font-['Noto_Sans','Noto_Sans_CJK_SC',sans-serif] text-[8px] text-[#333]">
      <TitleBar />
      <MenuTabs />
      <Ribbon />
      <div className="flex-1 min-h-0 flex">
        <OperationsPanel />
        <GraphicsArea />
      </div>
      <StatusBar />
      <ToolpathDialog />
      <svg width="9" height="14" viewBox="0 0 9 14" className="absolute left-[497px] top-[182px]" aria-hidden="true">
        <path d="M1 1v10l2-2 2 4 2-1-2-4h3z" fill="#fff" stroke="#222" />
      </svg>
    </div>
  );
}
